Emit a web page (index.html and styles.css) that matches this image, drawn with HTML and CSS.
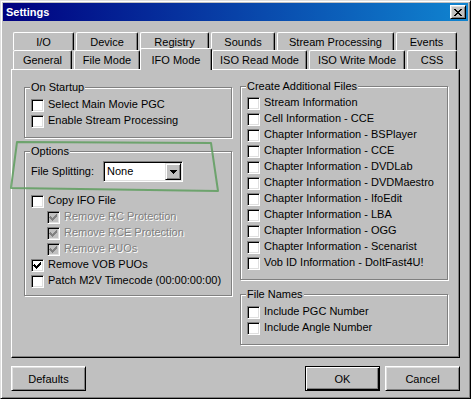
FILE: index.html
```html
<!DOCTYPE html>
<html lang="en">
<head>
  <meta charset="UTF-8" />
  <title>Settings</title>
  <link rel="stylesheet" href="styles.css">
</head>
<body>

  <div class="window">
    <div class="titlebar">
      <span class="title">Settings</span>
      <span class="close">
        <svg width="8" height="7" viewBox="0 0 8 7" shape-rendering="crispEdges"><path d="M0 0h2l6 7h-2z M6 0h2l-6 7h-2z" fill="#000"/></svg>
      </span>
    </div>

    <div class="content">
      <div class="tabs">
        <div class="tab-row">
          <div class="tab t-io">I/O</div>
          <div class="tab t-device">Device</div>
          <div class="tab t-registry">Registry</div>
          <div class="tab t-sounds">Sounds</div>
          <div class="tab t-stream">Stream Processing</div>
          <div class="tab t-events">Events</div>
        </div>
        <div class="tab-row front">
          <div class="tab t-general">General</div>
          <div class="tab t-filemode">File Mode</div>
          <div class="tab t-ifo active">IFO Mode</div>
          <div class="tab t-isoread">ISO Read Mode</div>
          <div class="tab t-isowrite">ISO Write Mode</div>
          <div class="tab t-css">CSS</div>
        </div>
      </div>

      <div class="panel">
        <div class="col left">
          <div class="group">
            <span class="legend">On Startup</span>
            <div class="check"><span class="cb"></span>Select Main Movie PGC</div>
            <div class="check"><span class="cb"></span>Enable Stream Processing</div>
          </div>

          <div class="group options">
            <span class="legend">Options</span>
            <div class="field">
              <span class="field-label">File Splitting:</span>
              <div class="combo">
                <span class="combo-value">None</span>
                <span class="combo-btn">
                  <svg width="7" height="4" viewBox="0 0 7 4" shape-rendering="crispEdges"><path d="M0 0h7v1h-1v1h-1v1h-1v1h-1v-1h-1v-1h-1v-1h-1z" fill="#000"/></svg>
                </span>
              </div>
            </div>
            <div class="check"><span class="cb"></span>Copy IFO File</div>
            <div class="check sub disabled"><span class="cb"><svg viewBox="1 1 11 11" shape-rendering="crispEdges"><path class="tick" d="M3 5h1v1h1v1h1v-1h1v-1h1v-1h1v-1h1v3h-1v1h-1v1h-1v1h-1v1h-1v-1h-1v-1h-1v-1h-1z"/></svg></span>Remove RC Protection</div>
            <div class="check sub disabled"><span class="cb"><svg viewBox="1 1 11 11" shape-rendering="crispEdges"><path class="tick" d="M3 5h1v1h1v1h1v-1h1v-1h1v-1h1v-1h1v3h-1v1h-1v1h-1v1h-1v1h-1v-1h-1v-1h-1v-1h-1z"/></svg></span>Remove RCE Protection</div>
            <div class="check sub disabled"><span class="cb"><svg viewBox="1 1 11 11" shape-rendering="crispEdges"><path class="tick" d="M3 5h1v1h1v1h1v-1h1v-1h1v-1h1v-1h1v3h-1v1h-1v1h-1v1h-1v1h-1v-1h-1v-1h-1v-1h-1z"/></svg></span>Remove PUOs</div>
            <div class="check"><span class="cb"><svg viewBox="1 1 11 11" shape-rendering="crispEdges"><path class="tick" d="M3 5h1v1h1v1h1v-1h1v-1h1v-1h1v-1h1v3h-1v1h-1v1h-1v1h-1v1h-1v-1h-1v-1h-1v-1h-1z"/></svg></span>Remove VOB PUOs</div>
            <div class="check"><span class="cb"></span>Patch M2V Timecode (00:00:00:00)</div>
          </div>
        </div>

        <div class="col right">
          <div class="group files">
            <span class="legend">Create Additional Files</span>
            <div class="check"><span class="cb"></span>Stream Information</div>
            <div class="check"><span class="cb"></span>Cell Information - CCE</div>
            <div class="check"><span class="cb"></span>Chapter Information - BSPlayer</div>
            <div class="check"><span class="cb"></span>Chapter Information - CCE</div>
            <div class="check"><span class="cb"></span>Chapter Information - DVDLab</div>
            <div class="check"><span class="cb"></span>Chapter Information - DVDMaestro</div>
            <div class="check"><span class="cb"></span>Chapter Information - IfoEdit</div>
            <div class="check"><span class="cb"></span>Chapter Information - LBA</div>
            <div class="check"><span class="cb"></span>Chapter Information - OGG</div>
            <div class="check"><span class="cb"></span>Chapter Information - Scenarist</div>
            <div class="check"><span class="cb"></span>Vob ID Information - DoItFast4U!</div>
          </div>

          <div class="group names">
            <span class="legend">File Names</span>
            <div class="check"><span class="cb"></span>Include PGC Number</div>
            <div class="check"><span class="cb"></span>Include Angle Number</div>
          </div>
        </div>
      </div>

      <div class="buttons">
        <div class="btn">Defaults</div>
        <div class="btn default ok">OK</div>
        <div class="btn cancel">Cancel</div>
      </div>
    </div>

    <!-- green marker drawn over the Options box -->
    <svg class="marker" width="471" height="399" viewBox="0 0 471 399">
      <polygon points="17,142 211,143 218,191 11,188" fill="none" stroke="#5e9e5e" stroke-opacity="0.85" stroke-width="2" stroke-linejoin="round"/>
    </svg>
  </div>

</body>
</html>
```

FILE: styles.css
```css
* {
  box-sizing: border-box;
}

body {
  margin: 0;
  font-family: "Liberation Sans", Arial, sans-serif;
  font-size: 11px;
  color: #000;
  background-color: #c0c0c0;
}

.window {
  position: relative;
  width: 471px;
  height: 399px;
  background-color: #c0c0c0;
  border: 1px solid;
  border-color: #dfdfdf #000 #000 #dfdfdf;
  box-shadow: inset 1px 1px #fff, inset -1px -1px #808080;
  padding: 2px;
  display: flex;
  flex-direction: column;
}

.titlebar {
  height: 18px;
  background: linear-gradient(to right, #000080, #1084d0);
  display: flex;
  align-items: center;
  justify-content: space-between;
  padding: 0 2px 0 3px;
}

.title {
  color: white;
  font-weight: bold;
}

.close {
  width: 16px;
  height: 14px;
  background-color: #c0c0c0;
  border: 1px solid;
  border-color: #fff #000 #000 #fff;
  box-shadow: inset 1px 1px #dfdfdf, inset -1px -1px #808080;
  display: flex;
  align-items: center;
  justify-content: center;
}

.close svg {
  display: block;
}

.content {
  flex: 1;
  padding: 11px 8px 5px 8px;
  display: flex;
  flex-direction: column;
}

/* tabs */

.tabs {
  padding-left: 2px;
}

.tab-row {
  display: flex;
  align-items: flex-start;
  gap: 2px;
  height: 18px;
}

.tab-row.front {
  height: 19px;
}

.tab {
  height: 100%;
  background-color: #c0c0c0;
  border-top: 1px solid #fff;
  border-left: 1px solid #fff;
  border-right: 1px solid #000;
  border-radius: 2px 2px 0 0;
  box-shadow: inset -1px 0 #808080;
  display: flex;
  align-items: center;
  justify-content: center;
  white-space: nowrap;
}

.tab.active {
  position: relative;
  z-index: 1;
  height: 22px;
  margin: -2px -2px 0;
}

.t-io { width: 61px; }
.t-device { width: 62px; }
.t-registry { width: 69px; }
.t-sounds { width: 64px; }
.t-stream { width: 117px; }
.t-events { width: 61px; }

.t-general { width: 59px; }
.t-filemode { width: 66px; }
.t-ifo { width: 72px; }
.t-isoread { width: 95px; }
.t-isowrite { width: 96px; }
.t-css { width: 50px; }

/* panel */

.panel {
  height: 289px;
  border: 1px solid;
  border-color: #fff #000 #000 #fff;
  box-shadow: inset -1px -1px #808080;
  display: flex;
  gap: 8px;
  padding: 0 10px 0 12px;
}

.col {
  width: 208px;
  display: flex;
  flex-direction: column;
}

.col.left {
  padding-top: 17px;
  gap: 13px;
}

.col.right {
  padding-top: 16px;
  gap: 14px;
}

.group {
  position: relative;
  border: 1px solid #808080;
  box-shadow: inset 1px 1px #fff, 1px 1px #fff;
  padding: 10px 6px 7px;
}

.group.files {
  padding-top: 9px;
}

.group.options {
  padding-top: 9px;
  padding-bottom: 5px;
}

.legend {
  position: absolute;
  top: -7px;
  left: 5px;
  padding: 0 1px;
  line-height: 13px;
  background-color: #c0c0c0;
  white-space: nowrap;
}

.check {
  display: flex;
  align-items: flex-start;
  gap: 4px;
  height: 16px;
  line-height: 13px;
  white-space: nowrap;
}

.check.sub {
  padding-left: 16px;
}

.check.disabled {
  color: #808080;
  text-shadow: 1px 1px #fff;
}

.cb {
  flex: none;
  width: 13px;
  height: 13px;
  margin-top: 1px;
  background-color: #fff;
  border: 1px solid;
  border-color: #808080 #fff #fff #808080;
  box-shadow: inset 1px 1px #000, inset -1px -1px #dfdfdf;
}

.cb svg {
  display: block;
  width: 11px;
  height: 11px;
}

.tick {
  fill: #000;
}

.disabled .cb {
  background-color: #c0c0c0;
}

.disabled .tick {
  fill: #808080;
}

/* combo box */

.field {
  display: flex;
  align-items: center;
  height: 21px;
  margin-bottom: 12px;
}

.field-label {
  width: 72px;
  line-height: 13px;
}

.combo {
  width: 80px;
  height: 21px;
  background-color: #fff;
  border: 1px solid;
  border-color: #808080 #fff #fff #808080;
  box-shadow: inset 1px 1px #000, inset -1px -1px #dfdfdf;
  padding: 1px;
  display: flex;
}

.combo-value {
  flex: 1;
  padding-left: 2px;
  line-height: 17px;
}

.combo-btn {
  width: 16px;
  height: 17px;
  background-color: #c0c0c0;
  border: 1px solid;
  border-color: #dfdfdf #000 #000 #dfdfdf;
  box-shadow: inset 1px 1px #fff, inset -1px -1px #808080;
  display: flex;
  align-items: center;
  justify-content: center;
}

.combo-btn svg {
  display: block;
}

/* buttons */

.buttons {
  display: flex;
  margin-top: 8px;
  height: 25px;
}

.btn {
  width: 75px;
  height: 25px;
  border: 1px solid;
  border-color: #fff #000 #000 #fff;
  box-shadow: inset 1px 1px #dfdfdf, inset -1px -1px #808080;
  display: flex;
  align-items: center;
  justify-content: center;
}

.btn.default {
  border-color: #000;
  box-shadow: inset 1px 1px #fff, inset -1px -1px #000, inset -2px -2px #808080;
}

.btn.ok {
  margin-left: auto;
}

.btn.cancel {
  margin-left: 5px;
}

.marker {
  position: absolute;
  left: -1px;
  top: -1px;
  pointer-events: none;
}
```
